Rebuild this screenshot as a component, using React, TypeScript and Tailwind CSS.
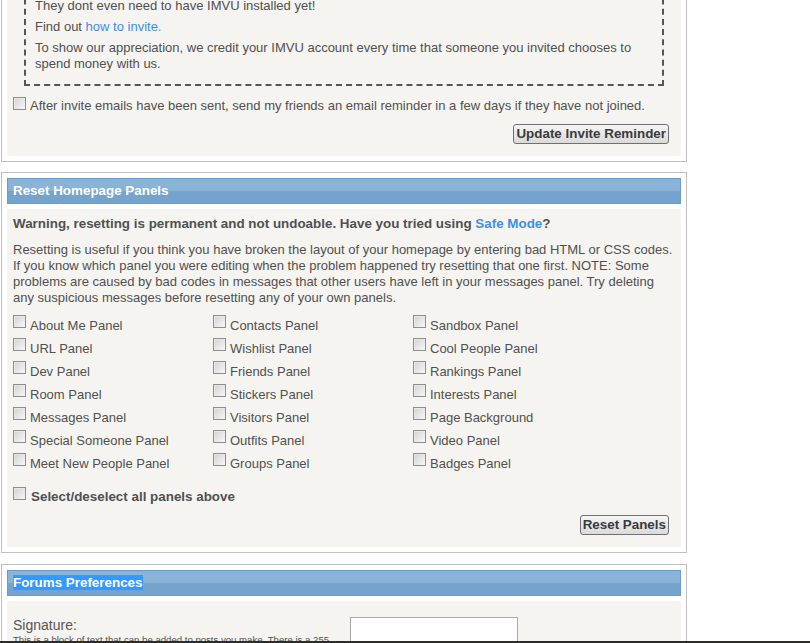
import React from 'react';

const PANELS = [
  'About Me Panel',
  'Contacts Panel',
  'Sandbox Panel',
  'URL Panel',
  'Wishlist Panel',
  'Cool People Panel',
  'Dev Panel',
  'Friends Panel',
  'Rankings Panel',
  'Room Panel',
  'Stickers Panel',
  'Interests Panel',
  'Messages Panel',
  'Visitors Panel',
  'Page Background',
  'Special Someone Panel',
  'Outfits Panel',
  'Video Panel',
  'Meet New People Panel',
  'Groups Panel',
  'Badges Panel',
];

// old-school grey checkbox
function Box({ className = '' }: { className?: string }) {
  return (
    <input
      type="checkbox"
      className={`appearance-none shrink-0 w-[13px] h-[13px] border border-[#8e8e8e] bg-[linear-gradient(135deg,#d2d2d2,#f8f8f8)] shadow-[inset_1px_1px_0_#e8e8e8] ${className}`}
    />
  );
}

function OldButton({ children }: { children: React.ReactNode }) {
  return (
    <button className="h-[20px] px-[2px] leading-[18px] text-[13.4px] font-bold text-[#3a3a3a] border border-[#707070] rounded-[3px] bg-[linear-gradient(#f5f5f5,#dadada)]">
      {children}
    </button>
  );
}

function Header({ children }: { children: React.ReactNode }) {
  return (
    <div className="h-[26px] border border-[#6a9bcb] bg-[linear-gradient(#89b3d7_0_50%,#74a4cd_50%_100%)] pl-[5px] leading-[24px] text-[13.4px] font-bold text-white">
      {children}
    </div>
  );
}

export default function App() {
  return (
    <div className="min-h-[643px] bg-white font-['Liberation_Sans',Arial,sans-serif] text-[13px] text-[#505050]">
      <div className="-mt-[44px] ml-[1px] w-[686px]">
        {/* Invite friends (top cut off) */}
        <div className="border border-[#c0c0c0] p-[5px] mb-[10px]">
          <div className="bg-[#f5f4f0] px-[6px] pt-[6px] pb-[12px]">
            <div className="mx-[11px] border-2 border-dashed border-[#555] pl-[9px] pr-[9px] pt-[7px] pb-[12px] leading-[16px]">
              <p>Invite your friends to join you on IMVU!</p>
              <p className="mt-[5px]">They dont even need to have IMVU installed yet!</p>
              <p className="mt-[5px]">
                Find out <a className="text-[#3f8fe6]">how to invite.</a>
              </p>
              <p className="mt-[5px]">
                To show our appreciation, we credit your IMVU account every time that someone you invited chooses to
                spend money with us.
              </p>
            </div>
            <label className="mt-[11px] flex items-start gap-[4px] leading-[16px]">
              <Box />
              <span className="mt-[1px]">
                After invite emails have been sent, send my friends an email reminder in a few days if they have not
                joined.
              </span>
            </label>
            <div className="mt-[10px] flex justify-end mr-[6px]">
              <OldButton>Update Invite Reminder</OldButton>
            </div>
          </div>
        </div>

        {/* Reset Homepage Panels */}
        <div className="border border-[#c0c0c0] p-[5px] mb-[11px]">
          <Header>Reset Homepage Panels</Header>
          <div className="mt-[5px] bg-[#f5f4f0] px-[6px] pt-[6px] pb-[12px]">
            <p className="text-[13.4px] font-bold leading-[17px]">
              Warning, resetting is permanent and not undoable. Have you tried using{' '}
              <a className="text-[#3f8fe6]">Safe Mode</a>?
            </p>
            <p className="mt-[10px] leading-[16px]">
              Resetting is useful if you think you have broken the layout of your homepage by entering bad HTML or CSS
              codes. If you know which panel you were editing when the problem happened try resetting that one first.
              NOTE: Some problems are caused by bad codes in messages that other users have left in your messages
              panel. Try deleting any suspicious messages before resetting any of your own panels.
            </p>
            <div className="mt-[7px] grid grid-cols-[200px_200px_200px]">
              {PANELS.map((name) => (
                <label key={name} className="h-[23px] flex items-start gap-[4px]">
                  <Box className="mt-[2px]" />
                  <span className="mt-[5px] leading-[16px]">{name}</span>
                </label>
              ))}
            </div>
            <label className="mt-[11px] flex items-start gap-[5px]">
              <Box className="mt-[2px]" />
              <span className="mt-[3px] text-[13.4px] font-bold leading-[17px]">Select/deselect all panels above</span>
            </label>
            <div className="mt-[10px] flex justify-end mr-[6px]">
              <OldButton>Reset Panels</OldButton>
            </div>
          </div>
        </div>

        {/* Forums Preferences */}
        <div className="border border-[#c0c0c0] p-[5px]">
          <Header>
            <span className="bg-[#3399ff]">Forums Preferences</span>
          </Header>
          <div className="mt-[5px] bg-[#f5f4f0] px-[6px] pt-[16px] pb-[12px]">
            <div className="flex items-start">
              <div className="w-[337px]">
                <div className="leading-[16px] text-[14px] text-[#555]">Signature:</div>
                <div className="text-[9.6px] leading-[12px] mt-[1px]">
                  This is a block of text that can be added to posts you make. There is a 255 character limit.
                </div>
              </div>
              <textarea className="w-[168px] h-[60px] border border-[#a9a9a9] bg-white resize-none" />
            </div>
          </div>
        </div>
      </div>
      <div className="fixed bottom-0 inset-x-0 h-[2px] bg-[#2e2c28]" />
    </div>
  );
}
